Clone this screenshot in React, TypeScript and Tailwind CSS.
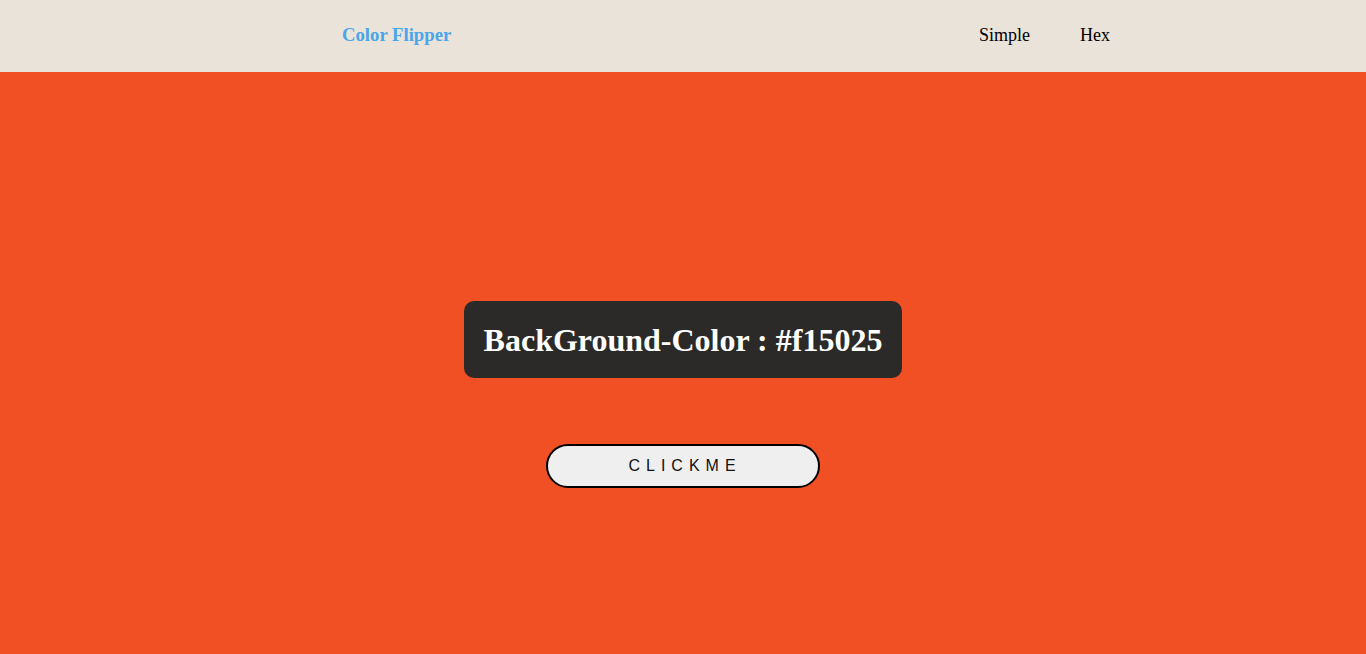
export default function App() {
  return (
    <div className="min-h-[654px] bg-[#f15025] font-['Liberation_Serif',serif]">
      <nav className="flex h-[72px] items-center justify-between bg-[#eae3da] pb-[2px] pl-[342px] pr-[256px]">
        <h3 className="text-[18.72px] font-bold text-[#49a6e9]">Color Flipper</h3>
        <ul className="flex gap-[50px] text-[18px] text-black">
          <li>Simple</li>
          <li>Hex</li>
        </ul>
      </nav>
      <main className="flex flex-col items-center pt-[229px]">
        <h2 className="rounded-[10px] bg-[#2b2a28] px-5 pb-[19px] pt-[21px] text-[32px] font-bold leading-[37px] text-white">
          BackGround-Color : #f15025
        </h2>
        <button className="mt-[66px] h-[44px] w-[274px] rounded-full border-2 border-black bg-[#efefef] pl-[4px] font-['Liberation_Sans',sans-serif] text-[16px] tracking-[6px] text-[#111]">
          CLICKME
        </button>
      </main>
    </div>
  )
}
